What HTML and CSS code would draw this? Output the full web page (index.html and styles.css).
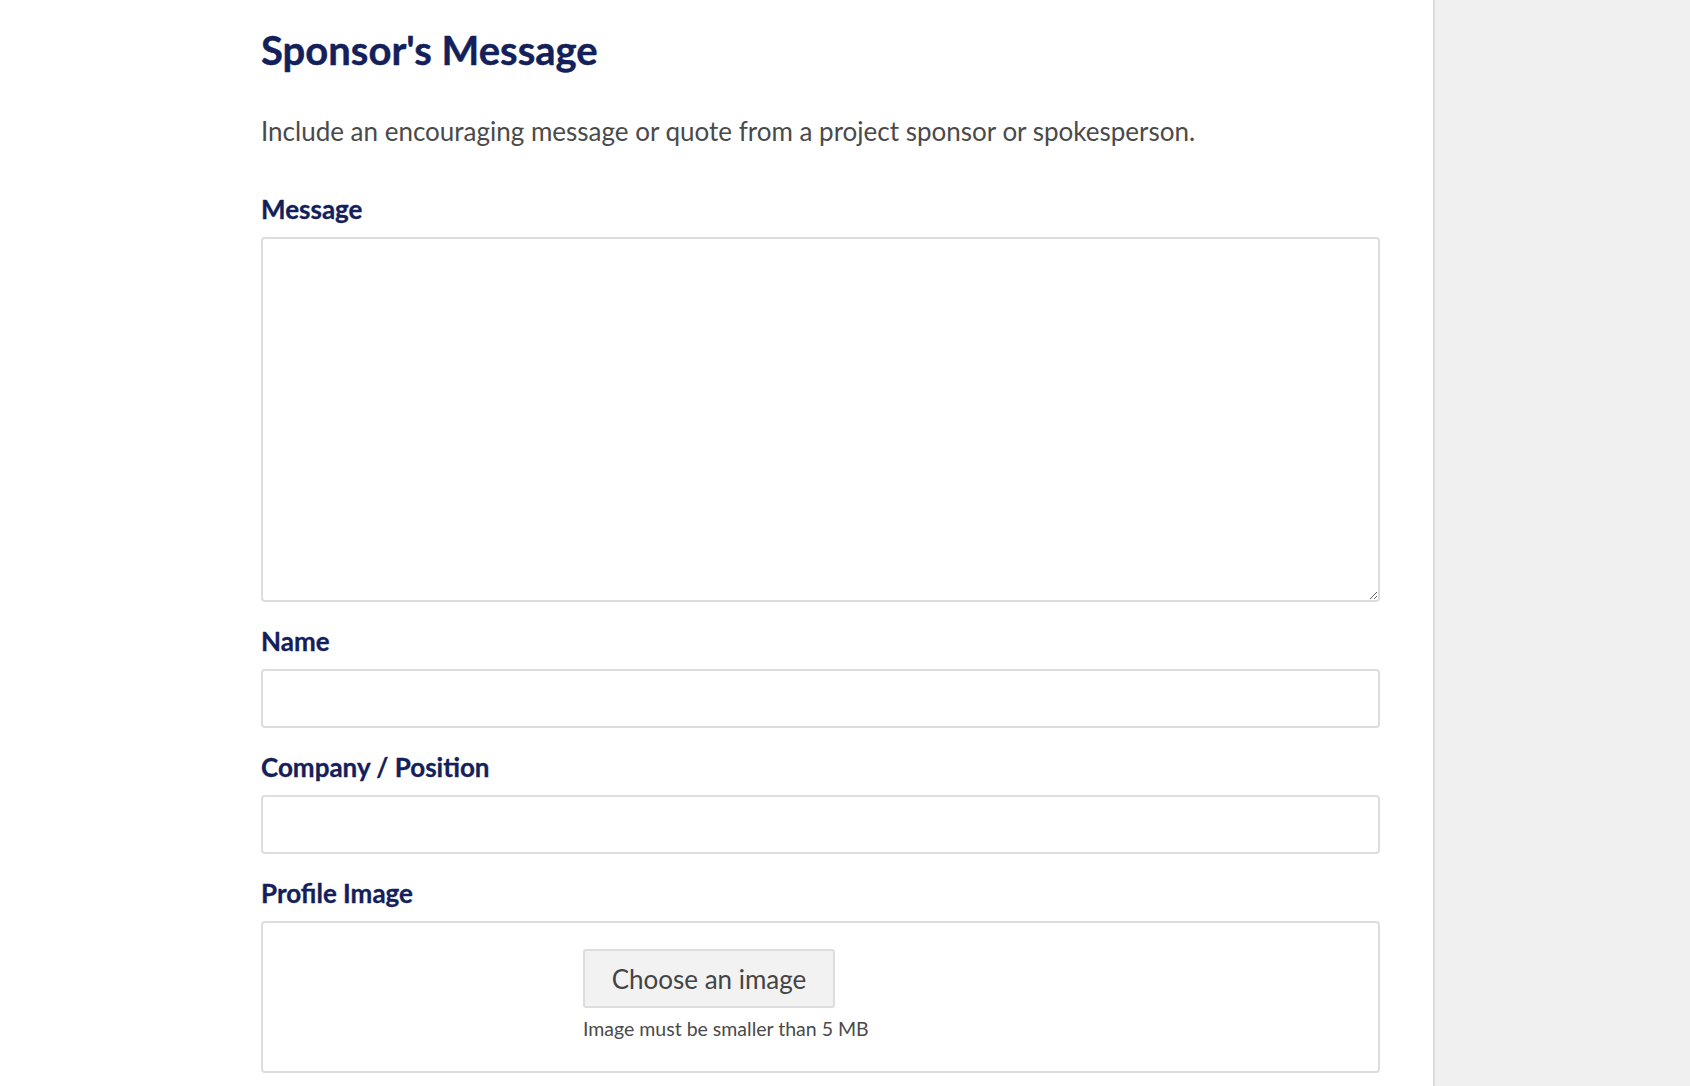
FILE: index.html
```html
<!DOCTYPE html>
<html lang="en">

<head>
    <meta charset="UTF-8">
    <meta name="viewport" content="width=device-width, initial-scale=1.0">
    <title>Sponsor's Message</title>
    <link rel="stylesheet" href="styles.css">
</head>

<body>
    <div class="page">
        <div class="main">
            <h1>Sponsor's Message</h1>

            <p class="intro">Include an encouraging message or quote from a project sponsor or spokesperson.</p>

            <div class="field">
                <label for="message">Message</label>
                <textarea id="message" class="message-box"></textarea>
            </div>

            <div class="field">
                <label for="name">Name</label>
                <input type="text" id="name" class="text-input">
            </div>

            <div class="field">
                <label for="company">Company / Position</label>
                <input type="text" id="company" class="text-input">
            </div>

            <div class="field">
                <label>Profile Image</label>
                <div class="image-box">
                    <div class="image-preview"></div>
                    <div class="image-upload">
                        <button class="choose-btn">Choose an image</button>
                        <span class="hint">Image must be smaller than 5 MB</span>
                    </div>
                </div>
            </div>
        </div>

        <div class="sidebar"></div>
    </div>
</body>

</html>
```

FILE: styles.css
```css
html {
    background-color: #ffffff;
    font-family: Lato, "Open Sans", Arial, sans-serif;
}

body {
    margin: 0;
}

.page {
    display: flex;
    min-height: 100vh;
}

.main {
    flex: 1;
    padding: 0 53px 0 261px;
}

.sidebar {
    width: 255px;
    background-color: #f0f0f0;
    border-left: 2px solid #dddddd;
}

h1 {
    color: #13205a;
    font-size: 40px;
    line-height: 48px;
    font-weight: 700;
    -webkit-text-stroke: 0.4px #13205a;
    margin: 26px 0 0 0;
}

.intro {
    color: #4a4a4a;
    font-size: 26px;
    line-height: 31px;
    margin: 42px 0 0 0;
}

.field {
    margin-top: 24px;
}

.field:first-of-type {
    margin-top: 47px;
}

label {
    display: block;
    color: #13205a;
    font-size: 26px;
    line-height: 31px;
    font-weight: 700;
    -webkit-text-stroke: 0.3px #13205a;
    margin-bottom: 12px;
}

.message-box,
.text-input,
.image-box {
    display: block;
    box-sizing: border-box;
    width: 100%;
    border: 2px solid #dddddd;
    border-radius: 4px;
    background: #ffffff;
    font-family: inherit;
    font-size: 20px;
    margin: 0;
}

.message-box {
    height: 365px;
    resize: vertical;
}

.text-input {
    height: 59px;
    padding: 0 12px;
}

.image-box {
    height: 152px;
    display: flex;
}

.image-preview {
    width: 320px;
}

.image-upload {
    display: flex;
    flex-direction: column;
    align-items: flex-start;
    padding-top: 26px;
}

.choose-btn {
    width: 252px;
    height: 59px;
    background-color: #f2f2f2;
    border: 2px solid #dddddd;
    border-radius: 3px;
    color: #444444;
    font-family: inherit;
    font-size: 26px;
}

.hint {
    color: #4a4a4a;
    font-size: 19.5px;
    line-height: 23px;
    margin-top: 9px;
}
```
